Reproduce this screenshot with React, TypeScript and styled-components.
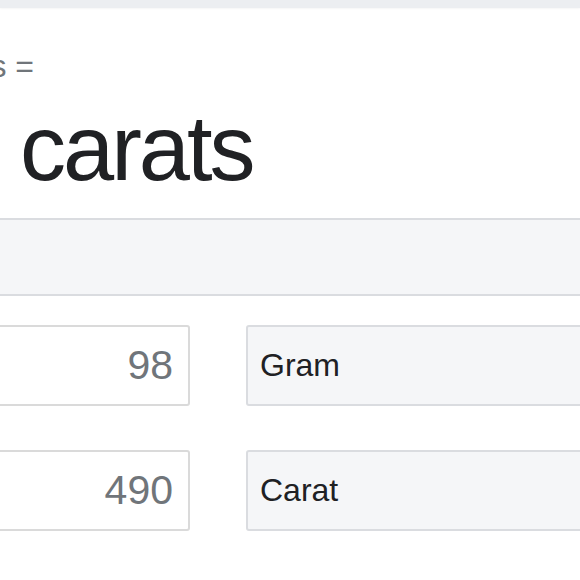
import styled, { createGlobalStyle } from 'styled-components';

const GlobalStyle = createGlobalStyle`
  html, body {
    margin: 0;
    padding: 0;
    background: #fff;
    overflow: hidden;
  }
  body {
    font-family: "Liberation Sans", Arial, sans-serif;
  }
`;

const TopBar = styled.div`
  height: 8px;
  background: #eceef1;
  box-shadow: 0 1px 2px rgba(0, 0, 0, 0.04);
`;

const Card = styled.div`
  width: 756px;
  margin-left: -160px;
  padding-top: 40px;
`;

const Result = styled.div`
  padding-left: 47px;
`;

const Equation = styled.div`
  margin-left: -14px;
  font-size: 32px;
  line-height: 36px;
  color: #70757a;
  white-space: nowrap;
`;

const Answer = styled.div`
  margin-top: 14px;
  margin-left: -46px;
  font-size: 92px;
  line-height: 100px;
  letter-spacing: -3px;
  word-spacing: 12px;
  color: #202124;
  white-space: nowrap;
`;

const Category = styled.div`
  box-sizing: border-box;
  height: 78px;
  margin-top: 20px;
  background: #f5f6f8;
  border: 2px solid #dadce0;
  border-radius: 3px;
`;

const Rows = styled.div`
  display: flex;
  flex-direction: column;
  gap: 44px;
  margin-top: 29px;
`;

const Row = styled.div`
  display: grid;
  grid-template-columns: 350px 350px;
  gap: 56px;
`;

const Amount = styled.input`
  box-sizing: border-box;
  height: 81px;
  width: 100%;
  margin: 0;
  padding: 0 15px 0 0;
  border: 2px solid #dadada;
  border-radius: 3px;
  background: #fff;
  outline: none;
  font-family: "Liberation Sans", Arial, sans-serif;
  font-size: 41px;
  color: #70757a;
  text-align: right;
`;

const Unit = styled.div`
  box-sizing: border-box;
  height: 81px;
  display: flex;
  align-items: center;
  padding-left: 12px;
  background: #f5f6f8;
  border: 2px solid #dadce0;
  border-radius: 3px;
  font-size: 32px;
  color: #202124;
`;

const conversions = [
  { value: '98', unit: 'Gram' },
  { value: '490', unit: 'Carat' },
];

export default function App() {
  return (
    <>
      <GlobalStyle />
      <TopBar />
      <Card>
        <Result>
          <Equation>98 grams =</Equation>
          <Answer>490 carats</Answer>
        </Result>
        <Category />
        <Rows>
          {conversions.map(c => (
            <Row key={c.unit}>
              <Amount type='text' value={c.value} readOnly />
              <Unit>{c.unit}</Unit>
            </Row>
          ))}
        </Rows>
      </Card>
    </>
  );
}
